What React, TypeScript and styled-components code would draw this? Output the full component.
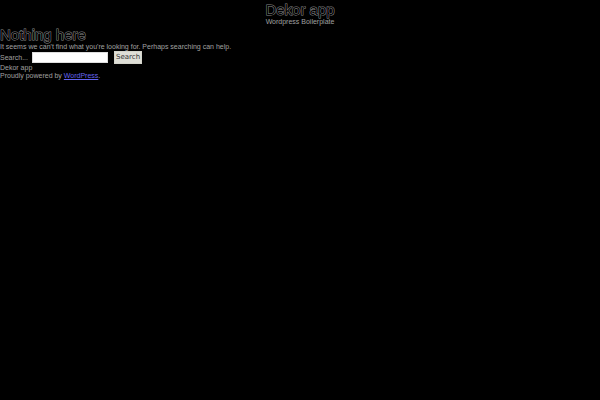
import React from "react";
import styled, { createGlobalStyle } from "styled-components";

const GlobalStyle = createGlobalStyle`
  * { box-sizing: border-box; }
  body {
    margin: 0;
    background: #000;
    color: #a0a0a0;
    font: 7px/8px "Liberation Sans", Arial, sans-serif;
    -webkit-font-smoothing: antialiased;
  }
`;

const Header = styled.header`
  text-align: center;
  padding-top: 1px;
`;

const Title = styled.h1`
  margin: 0;
  color: #000;
  font-size: 15px;
  line-height: 17px;
  font-weight: 400;
  -webkit-text-stroke: 1px #888;
  paint-order: stroke fill;
`;

const Content = styled.main`
  display: block;
`;

const Heading = styled(Title).attrs({ as: "h2" })`
  margin-top: 1px;
  line-height: 16px;
`;

const Text = styled.p`
  margin: 0;
`;

const SearchForm = styled.form`
  display: flex;
  align-items: center;
  height: 13px;
`;

const Field = styled.input`
  width: 76px;
  height: 11px;
  margin: 0 6px 0 4px;
  padding: 0 2px;
  border: 1px solid #ddd;
  background: #fff;
  font: inherit;
`;

const Submit = styled.button`
  height: 13px;
  padding: 0 1px;
  border: 1px solid #d4d4cb;
  background: #deded6;
  color: #333;
  font: 7px/11px "DejaVu Sans", sans-serif;
`;

const Link = styled.a`
  color: #6464f0;
  text-decoration: underline;
`;

export default function App() {
  return (
    <>
      <GlobalStyle />
      <Header>
        <Title>Dekor app</Title>
        <Text>Wordpress Boilerplate</Text>
      </Header>
      <Content>
        <Heading>Nothing here</Heading>
        <Text>It seems we can't find what you're looking for. Perhaps searching can help.</Text>
        <SearchForm onSubmit={(event: React.FormEvent) => event.preventDefault()}>
          <label htmlFor="search">Search...</label>
          <Field id="search" type="text" />
          <Submit type="submit">Search</Submit>
        </SearchForm>
      </Content>
      <footer>
        <Text>Dekor app</Text>
        <Text>
          Proudly powered by <Link href="#">WordPress</Link>.
        </Text>
      </footer>
    </>
  );
}
